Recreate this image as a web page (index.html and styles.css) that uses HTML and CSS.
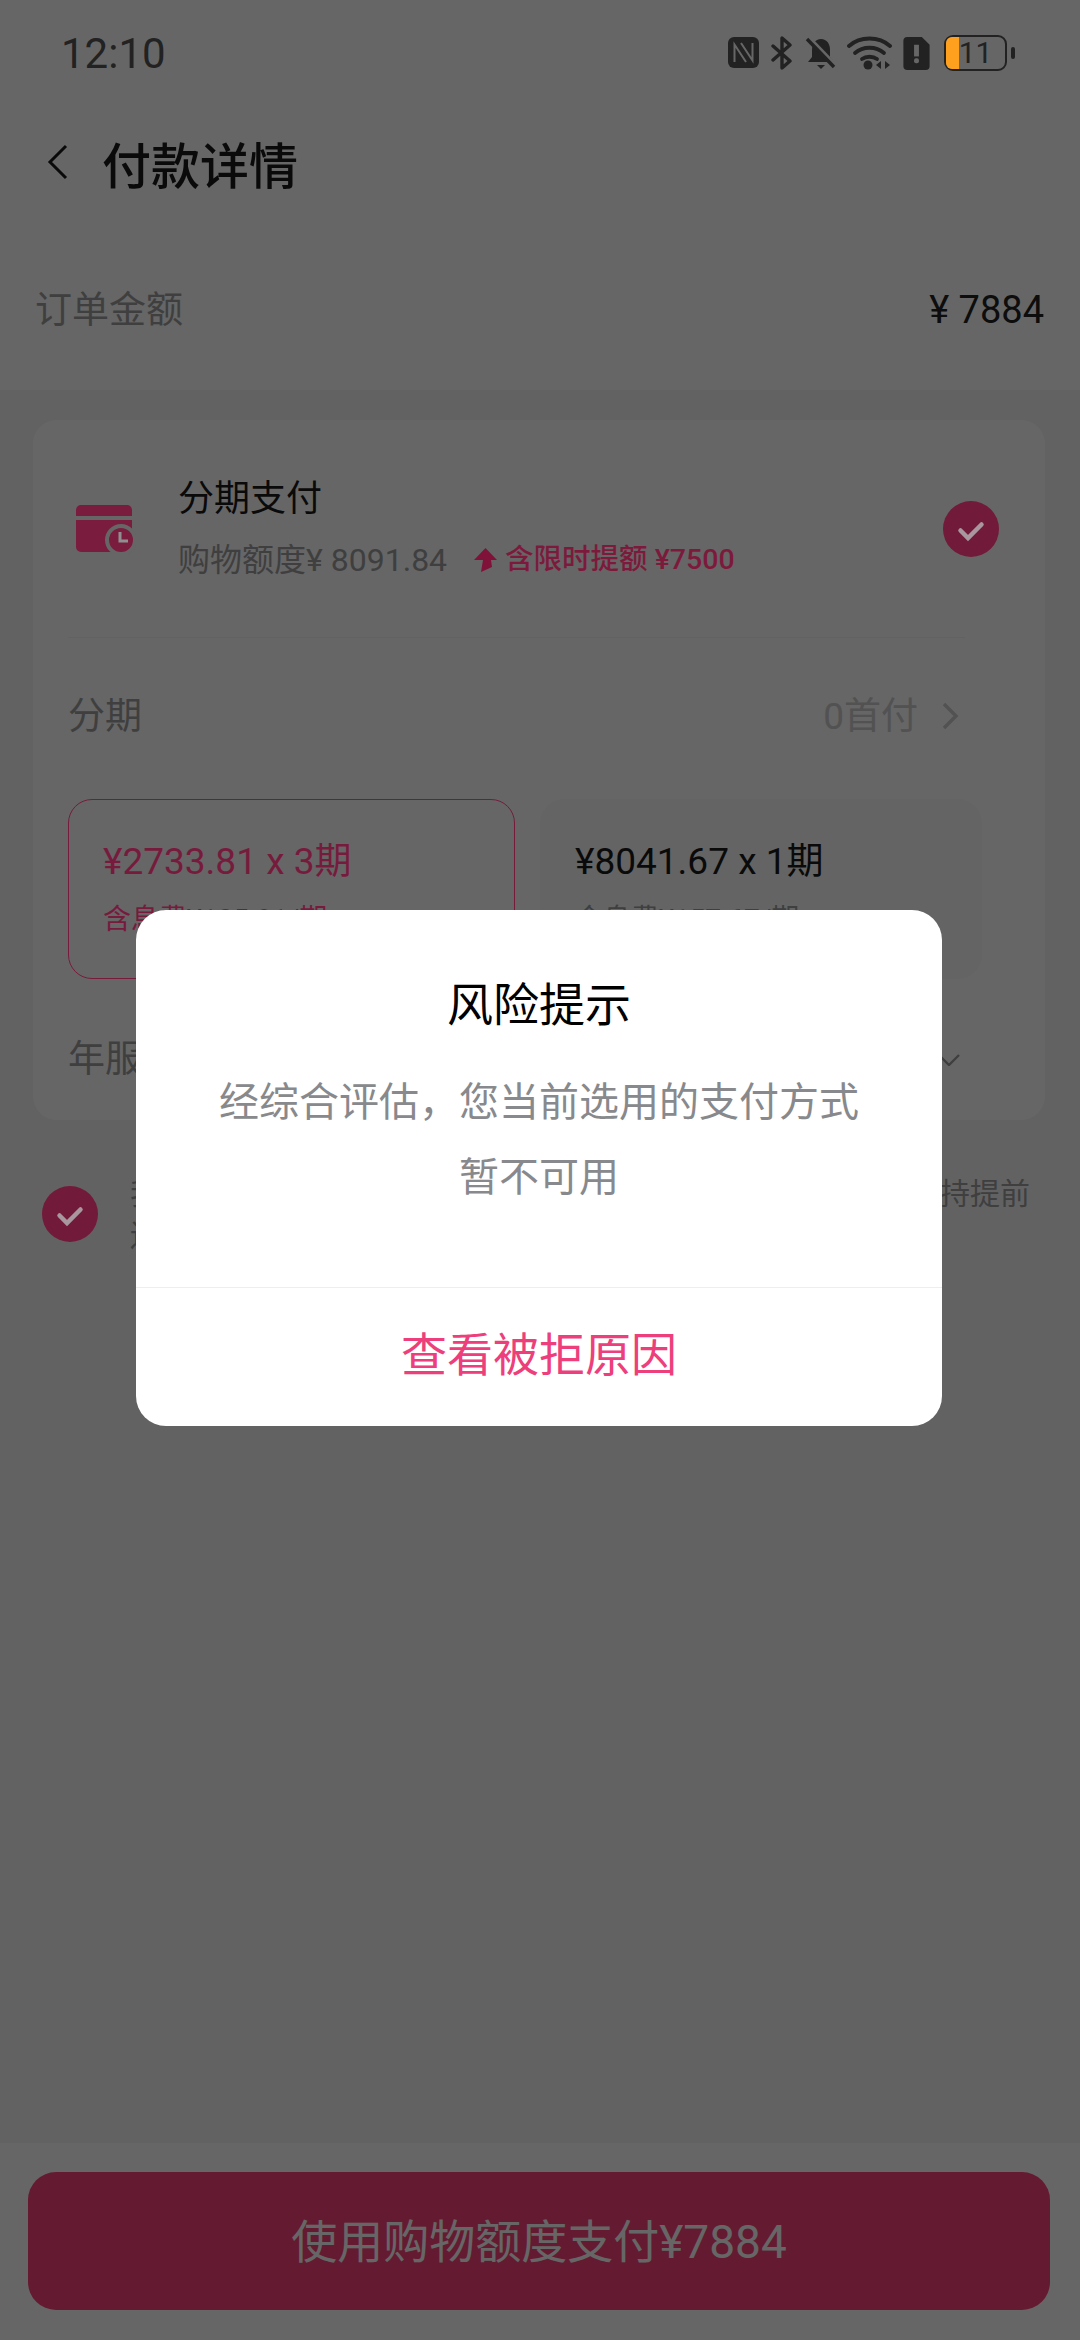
FILE: index.html
```html
<!DOCTYPE html>
<html lang="zh-CN">
<head>
    <meta charset="UTF-8">
    <meta name="viewport" content="width=device-width, initial-scale=1.0">
    <title>付款详情</title>
    <link rel="stylesheet" href="styles.css">
</head>
<body>
    <div class="page">
        <div class="top">
            <div class="status-bar">
                <span class="time">12:10</span>
                <div class="status-icons">
                    <svg class="icon-nfc" viewBox="0 0 31 31"><rect width="31" height="31" rx="6" fill="#555"/><g fill="none" stroke="#fff" stroke-width="2"><path d="M6.500 25V7.500L18 25"/><path d="M24.500 6v17.500L13 6"/></g></svg>
                    <svg class="icon-bt" viewBox="0 0 22 34"><path d="M2 24 19 9 11 2v30l8-7L2 10" fill="none" stroke="#555" stroke-width="3.4" stroke-linejoin="round" stroke-linecap="round"/></svg>
                    <svg class="icon-bell" viewBox="0 0 32 34"><path d="M16 3c6 0 9 5 9 11v7l4 5H3l4-5v-7c0-6 3-11 9-11z" fill="#555"/><path d="M12 29h8l-4 4z" fill="#555"/><path d="M4 1l27 28" stroke="#fff" stroke-width="3"/><path d="M2 3l27 28" stroke="#555" stroke-width="3.4"/></svg>
                    <svg class="icon-wifi" viewBox="0 0 45 34"><g fill="none" stroke="#555" stroke-width="3.8" stroke-linecap="round"><path d="M2 10C13 0 32 0 43 10"/><path d="M8 17c8-7 21-7 29 0"/><path d="M15 23c4-3 11-3 15 0"/></g><circle cx="21" cy="29" r="4.500" fill="#555"/><path d="M34 25v8l-5-4zM38 25v8l5-4z" fill="#555"/></svg>
                    <svg class="icon-sim" viewBox="0 0 27 34"><path d="M4 0h15l8 8v22a4 4 0 0 1-4 4H4a4 4 0 0 1-4-4V4a4 4 0 0 1 4-4z" fill="#555"/><rect x="11" y="8" width="5" height="12" fill="#fff"/><rect x="11" y="22" width="5" height="5" rx="2" fill="#fff"/></svg>
                    <div class="battery">
                        <span class="battery-fill"></span>
                        <span class="battery-num">11</span>
                    </div>
                    <span class="battery-tip"></span>
                </div>
            </div>
            <div class="nav">
                <svg class="back" viewBox="0 0 22 36"><path d="M19 2 3 18l16 16" fill="none" stroke="#1a1a1a" stroke-width="3"/></svg>
                <h1>付款详情</h1>
            </div>
            <div class="order">
                <span class="order-label">订单金额</span>
                <span class="order-amount">¥ 7884</span>
            </div>
        </div>

        <div class="card">
            <div class="method">
                <svg class="method-icon lit" viewBox="0 0 60 52">
                    <path d="M5 2h46a5 5 0 0 1 5 5v6H0V7a5 5 0 0 1 5-5z" fill="#7a1c3e"/>
                    <path d="M0 17h56v29a3 3 0 0 1-3 3H5a5 5 0 0 1-5-5z" fill="#7a1c3e"/>
                    <circle cx="45" cy="37" r="14" fill="#7a1c3e" stroke="#666" stroke-width="4"/>
                    <path d="M44 29v9h8" fill="none" stroke="#8f8f8f" stroke-width="3"/>
                </svg>
                <div class="method-text">
                    <div class="method-name">分期支付</div>
                    <div class="method-sub">
                        <span>购物额度¥ 8091.84</span>
                        <svg class="up-arrow lit" viewBox="0 0 23 26"><path d="M11.500 1 23 13h-6l1 7-11 5 2-12H0z" fill="#80123a"/></svg>
                        <span class="raise lit">含限时提额 ¥7500</span>
                    </div>
                </div>
                <span class="check check-method lit"><svg viewBox="0 0 24 24"><path d="M5 13l5 5 9-9" fill="none" stroke="#a8979e" stroke-width="3" stroke-linecap="round"/></svg></span>
            </div>
            <div class="divider"></div>
            <div class="row">
                <span>分期</span>
                <span class="row-right">0首付
                    <svg class="chevron" viewBox="0 0 18 28"><path d="M3 2l12 12L3 26" fill="none" stroke="#cccccc" stroke-width="3.4"/></svg>
                </span>
            </div>
            <div class="plans">
                <div class="plan plan-active lit">
                    <div class="plan-price">¥2733.81 x 3期</div>
                    <div class="plan-fee">含息费¥105.81/期</div>
                </div>
                <div class="plan plan-other">
                    <div class="plan-price">¥8041.67 x 1期</div>
                    <div class="plan-fee">含息费¥157.67/期</div>
                </div>
            </div>
            <div class="row row-fee">
                <span>年服务费</span>
                <svg class="chevron-down" viewBox="0 0 22 12"><path d="M1 1l10 10L21 1" fill="none" stroke="#9e9e9e" stroke-width="2.400"/></svg>
            </div>
        </div>

        <div class="agree">
            <span class="check check-agree lit"><svg viewBox="0 0 24 24"><path d="M5 13l5 5 9-9" fill="none" stroke="#a8979e" stroke-width="3" stroke-linecap="round"/></svg></span>
            <p>我已阅读并同意《分期付款服务协议》及相关条款，本产品支持提前还款。</p>
        </div>

        <div class="footer">
            <button class="pay-button">使用购物额度支付¥7884</button>
        </div>

        <div class="overlay">
            <div class="dialog">
                <div class="dialog-body">
                    <h2>风险提示</h2>
                    <p>经综合评估，您当前选用的支付方式<br>暂不可用</p>
                </div>
                <div class="dialog-action">查看被拒原因</div>
            </div>
        </div>
    </div>
</body>
</html>
```

FILE: styles.css
```css
body {
    margin: 0;
    font-family: Roboto, "Noto Sans CJK SC", sans-serif;
}

.page {
    position: relative;
    display: flex;
    flex-direction: column;
    width: 1080px;
    height: 2340px;
    overflow: hidden;
    background-color: #f6f6f6;
}

/* pink bits stay brighter than the dimming layer allows */
.lit {
    position: relative;
    z-index: 1;
}

.top {
    background-color: #fff;
}

.status-bar {
    display: flex;
    justify-content: space-between;
    align-items: center;
    height: 106px;
    padding: 0 65px 0 61px;
    color: #555;
}

.time {
    font-size: 42px;
}

.status-icons {
    display: flex;
    align-items: center;
}

.icon-nfc {
    width: 31px;
    height: 31px;
    margin: -2px 12px 0 0;
}

.icon-bt {
    width: 22px;
    height: 34px;
    margin-right: 12px;
}

.icon-bell {
    width: 32px;
    height: 34px;
    margin-right: 10px;
}

.icon-wifi {
    width: 45px;
    height: 34px;
    margin-right: 11px;
}

.icon-sim {
    width: 27px;
    height: 33px;
    margin-right: 14px;
}

.battery {
    position: relative;
    display: flex;
    justify-content: center;
    align-items: center;
    box-sizing: border-box;
    width: 63px;
    height: 36px;
    border: 2.5px solid #555;
    border-radius: 9px;
}

.battery-fill {
    position: absolute;
    z-index: 1;
    left: 0;
    top: 0;
    bottom: 0;
    width: 13px;
    border-radius: 6px 0 0 6px;
    background-color: #ffa01e;
}

.battery-num {
    position: relative;
    font-size: 30px;
    line-height: 30px;
    color: #555;
}

.battery-tip {
    width: 4px;
    height: 12px;
    margin-left: 4px;
    border-radius: 2px;
    background-color: #555;
}

.nav {
    display: flex;
    align-items: center;
    height: 112px;
    padding-left: 47px;
}

.back {
    width: 22px;
    height: 36px;
    margin-right: 33px;
}

.nav h1 {
    margin: 0;
    font-size: 49px;
    font-weight: 500;
    color: #1a1a1a;
}

.order {
    display: flex;
    justify-content: space-between;
    align-items: center;
    box-sizing: border-box;
    height: 172px;
    padding: 6px 36px 0 35px;
    font-size: 37px;
}

.order-label {
    color: #9e9e9e;
}

.order-amount {
    margin-top: 5px;
    font-size: 38px;
    color: #222;
}

.card {
    height: 700px;
    margin: 30px 35px 0 33px;
    padding: 0 35px;
    border-radius: 24px;
    background-color: #fff;
}

.method {
    display: flex;
    align-items: center;
    height: 217px;
}

.method-icon {
    width: 60px;
    height: 52px;
    margin: 0 42px 0 8px;
}

.method-text {
    flex-grow: 1;
}

.method-name {
    font-size: 36px;
    line-height: 54px;
    color: #1a1a1a;
}

.method-sub {
    display: flex;
    align-items: center;
    margin-top: 9px;
    font-size: 32px;
    line-height: 50px;
    color: #9e9e9e;
}

.up-arrow {
    width: 23px;
    height: 26px;
    margin: 0 8px 0 27px;
}

.raise {
    font-size: 28.500px;
    font-weight: 500;
    color: #7d1a3c;
}

.check {
    display: flex;
    justify-content: center;
    align-items: center;
    flex-shrink: 0;
    width: 56px;
    height: 56px;
    border-radius: 50%;
    background-color: #721a39;
}

.check svg {
    width: 36px;
    height: 36px;
}

.check-method {
    margin-right: 11px;
}

.divider {
    height: 1px;
    margin-right: 45px;
    background-color: #f6f6f6;
}

.row {
    display: flex;
    justify-content: space-between;
    align-items: center;
    height: 150px;
    margin-right: 50px;
    font-size: 37px;
    color: #9e9e9e;
}

.row-right {
    display: flex;
    align-items: center;
    color: #cccccc;
}

.chevron {
    width: 18px;
    height: 28px;
    margin: 6px 1px 0 23px;
}

.plans {
    display: flex;
    gap: 25px;
    margin-top: 11px;
}

.plan {
    box-sizing: border-box;
    height: 180px;
    padding: 36px 34px 0;
    border-radius: 24px;
}

.plan-active {
    width: 447px;
    border: 1.5px solid #771b3d;
    color: #771b3d;
}

.plan-other {
    width: 442px;
    border: 1.5px solid #fbfbfb;
    background-color: #fbfbfb;
    color: #1a1a1a;
}

.plan-price {
    font-size: 37px;
    line-height: 52px;
}

.plan-fee {
    margin-top: 10px;
    font-size: 28px;
    line-height: 44px;
}

.plan-other .plan-fee {
    color: #9e9e9e;
}

.row-fee {
    box-sizing: border-box;
    height: 142px;
    padding-top: 12px;
}

.chevron-down {
    width: 22px;
    height: 12px;
    margin-top: 8px;
}

.agree {
    display: flex;
    gap: 32px;
    padding: 53px 50px 0 42px;
}

.check-agree {
    margin-top: 13px;
}

.agree p {
    margin: 0;
    font-size: 30px;
    line-height: 42px;
    color: #9e9e9e;
}

.footer {
    box-sizing: border-box;
    height: 197px;
    margin-top: auto;
    padding: 29px 30px 30px 28px;
    background-color: #fff;
}

.pay-button {
    width: 100%;
    height: 138px;
    padding-bottom: 8px;
    border: none;
    border-radius: 28px;
    background-color: #fb4278;
    color: #fff;
    font-family: inherit;
    font-size: 46px;
}

.overlay {
    position: absolute;
    top: 0;
    right: 0;
    bottom: 0;
    left: 0;
    display: flex;
    justify-content: center;
    align-items: center;
    background-color: rgba(0, 0, 0, 0.6);
}

.dialog {
    position: relative;
    z-index: 2;
    box-sizing: border-box;
    width: 806px;
    height: 516px;
    margin: 0 2px 4px 0;
    border-radius: 30px;
    background-color: #fff;
    text-align: center;
}

.dialog-body {
    box-sizing: border-box;
    height: 378px;
    padding-top: 63px;
    border-bottom: 1.5px solid #eeeeee;
}

.dialog-body h2 {
    margin: 0;
    font-size: 46px;
    font-weight: 400;
    line-height: 64px;
    color: #000;
}

.dialog-body p {
    margin: 28px 0 0;
    font-size: 40px;
    line-height: 75px;
    color: #88898c;
}

.dialog-action {
    line-height: 134px;
    font-size: 46px;
    color: #ec3f7c;
}
```
